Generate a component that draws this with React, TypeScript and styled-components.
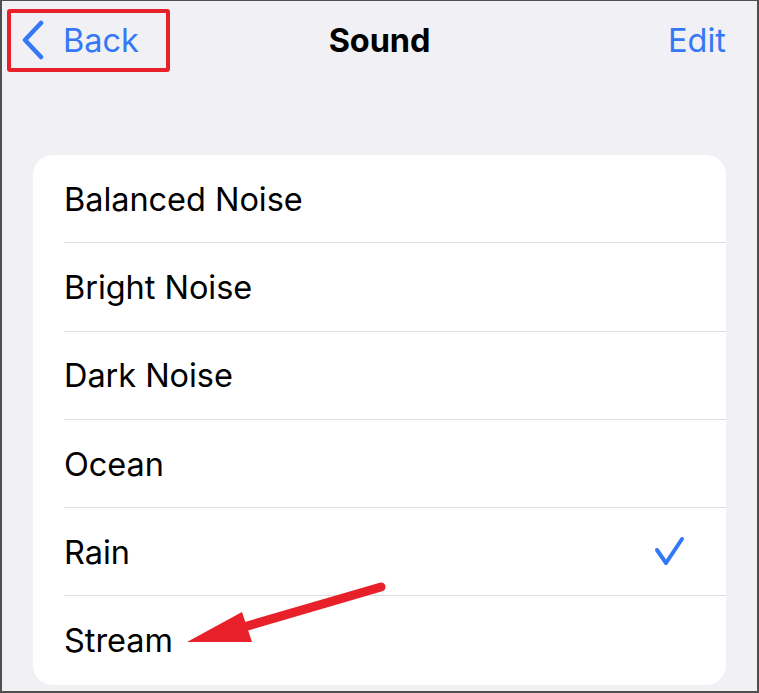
import React, { FC } from 'react';
import styled, { createGlobalStyle } from 'styled-components';

const GlobalStyle = createGlobalStyle`
  html, body {
    margin: 0;
    padding: 0;
    background: #f1f0f5;
  }
  * {
    box-sizing: border-box;
  }
`;

const Frame = styled.div`
  position: relative;
  width: 759px;
  height: 693px;
  background: #f1f0f5;
  border: 2px solid #4f4f4f;
  border-top-width: 1px;
  font-family: Inter, 'Liberation Sans', sans-serif;
  overflow: hidden;
`;

const Header = styled.div`
  display: grid;
  grid-template-columns: 1fr auto 1fr;
  align-items: center;
  height: 78px;
  padding: 0 31px;
`;

const Annotated = styled.div`
  justify-self: start;
  display: flex;
  align-items: center;
  gap: 18px;
  height: 63px;
  margin-left: -26px;
  padding: 0 27px 0 10px;
  border: 4px solid #e8202a;
  border-radius: 3px;
`;

const NavButton = styled.span`
  color: #3478f6;
  font-size: 32.5px;
  letter-spacing: 0;
`;

const Title = styled.h1`
  margin: 0;
  font-size: 32.5px;
  font-weight: 700;
  color: #000;
  letter-spacing: -0.1px;
`;

const EditButton = styled(NavButton)`
  justify-self: end;
`;

const Content = styled.div`
  padding: 76px 31px 0 31px;
`;

const Card = styled.div`
  background: #fff;
  border-radius: 20px;
  overflow: hidden;
`;

const Row = styled.div<{ $last?: boolean }>`
  position: relative;
  display: flex;
  align-items: center;
  justify-content: space-between;
  height: 88.3px;
  padding: 0 40px 0 31px;
  font-size: 32.5px;
  color: #000;
  letter-spacing: -0.05px;

  &::after {
    content: '';
    display: ${(p) => (p.$last ? 'none' : 'block')};
    position: absolute;
    left: 31px;
    right: 0;
    bottom: 0;
    height: 1px;
    background: #dedde2;
  }
`;

const Arrow = styled.svg`
  position: absolute;
  left: 0;
  top: 0;
  pointer-events: none;
`;

const sounds = ['Balanced Noise', 'Bright Noise', 'Dark Noise', 'Ocean', 'Rain', 'Stream'];
const selected = 'Rain';

const App: FC = () => (
  <>
    <GlobalStyle />
    <Frame>
      <Header>
        <Annotated>
          <svg width="24" height="40" viewBox="0 0 24 40">
            <path
              d="M20 3 L4 20 L20 37"
              fill="none"
              stroke="#3478f6"
              strokeWidth="4.5"
              strokeLinecap="round"
              strokeLinejoin="round"
            />
          </svg>
          <NavButton>Back</NavButton>
        </Annotated>
        <Title>Sound</Title>
        <EditButton>Edit</EditButton>
      </Header>
      <Content>
        <Card>
          {sounds.map((name, i) => (
            <Row key={name} $last={i === sounds.length - 1}>
              <span>{name}</span>
              {name === selected && (
                <svg width="32" height="32" viewBox="0 0 32 32">
                  <path
                    d="M3 14 L12 27 L28 3"
                    fill="none"
                    stroke="#3478f6"
                    strokeWidth="4"
                    strokeLinecap="round"
                    strokeLinejoin="round"
                  />
                </svg>
              )}
            </Row>
          ))}
        </Card>
      </Content>
      <Arrow width="759" height="693" viewBox="0 0 759 693">
        <line x1="379" y1="586" x2="235" y2="628" stroke="#e8202a" strokeWidth="9" strokeLinecap="round" />
        <polygon points="185,641 240,611 250,641" fill="#e8202a" />
      </Arrow>
    </Frame>
  </>
);

export default App;
